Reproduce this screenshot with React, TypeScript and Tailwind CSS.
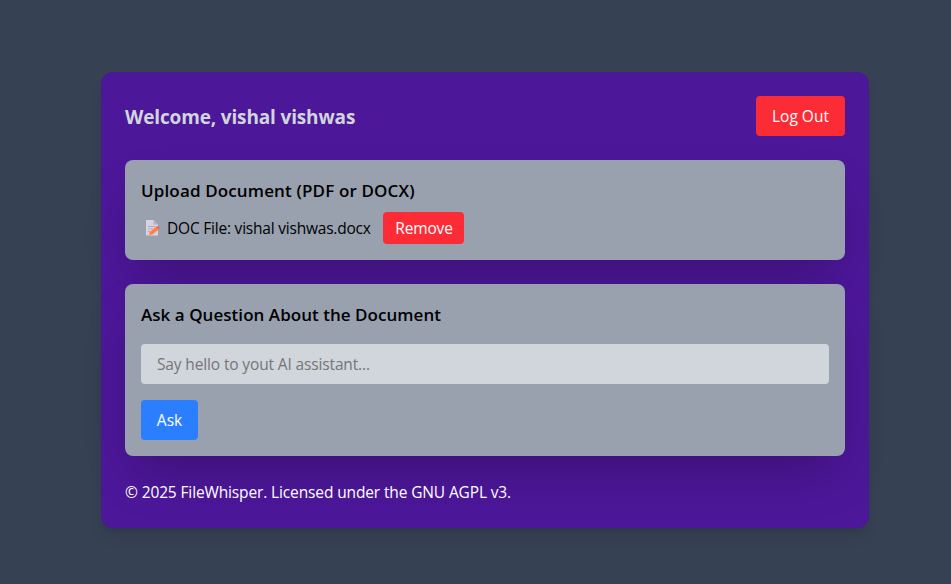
function MemoIcon() {
  return (
    <svg className="ml-1 mr-[7px] h-4 w-[15px] shrink-0" viewBox="0 0 15 16" aria-hidden="true">
      <path d="M1 0H8.5L13 4.5V15.5H1Z" fill="#d9d2e0" />
      <path d="M8.5 0V4.5H13Z" fill="#b9aec6" />
      <path d="M3 6.5H10M3 9H8M3 11.5H5" stroke="#b3a9bd" strokeWidth="1" />
      <path d="M4.7 12.2L11 6.8L14 9.3L7.4 14.6L3.6 15.4Z" fill="#ff8240" />
      <path d="M10.8 7L12 6Q13 5.7 14.2 7.2Q14.8 8.2 13.8 9.4Z" fill="#f06a5b" />
      <path d="M3.6 15.4L4.3 13.2L5.8 14.8Z" fill="#efb08d" />
    </svg>
  );
}

export default function App() {
  return (
    <div className="flex h-[584px] w-[951px] items-start overflow-hidden bg-gray-700 pt-[72px] pl-[101px] text-base text-black [font-family:'Open_Sans','Noto_Sans',sans-serif]">
      <main className="w-3xl shrink-0 rounded-xl bg-violet-900 p-6 shadow-lg">
        <header className="mb-6 flex items-center justify-between">
          <h1 className="pt-0.5 text-[19px] font-bold tracking-[-0.15px] whitespace-nowrap text-gray-300">Welcome, vishal vishwas</h1>
          <button className="h-10 w-[89px] rounded-sm bg-[#fb2c36] pt-0.5 text-[15.5px] whitespace-nowrap text-white">Log Out</button>
        </header>
        <section className="mb-6 rounded-lg bg-gray-400 p-4 shadow-2xl">
          <h2 className="mb-2 h-7 text-[17px] leading-[30px] font-semibold tracking-[0.14px] whitespace-nowrap">Upload Document (PDF or DOCX)</h2>
          <div className="flex h-8 items-center">
            <MemoIcon />
            <p className="w-[216px] pt-0.5 text-[15.5px] tracking-[-0.21px] whitespace-nowrap">DOC File: vishal vishwas.docx</p>
            <button className="h-8 w-[81px] rounded-sm bg-[#fb2c36] pt-0.5 pl-px text-[15.5px] tracking-[-0.15px] whitespace-nowrap text-white">Remove</button>
          </div>
        </section>
        <section className="mb-6 rounded-lg bg-gray-400 p-4 shadow-2xl">
          <h2 className="mb-4 h-7 text-[17px] leading-[30px] font-semibold tracking-[0.04px] whitespace-nowrap">Ask a Question About the Document</h2>
          <input className="mb-4 block h-10 w-full rounded-sm bg-gray-300 px-4 text-[15.5px] tracking-[-0.14px] placeholder:text-[#757575]" placeholder="Say hello to yout AI assistant..." />
          <button className="block h-10 w-[57px] rounded-sm bg-[#2b7fff] pt-0.5 text-[15.5px] text-white">Ask</button>
        </section>
        <footer className="text-[15.5px] leading-6 tracking-[-0.13px] whitespace-nowrap text-white">© 2025 FileWhisper. Licensed under the GNU AGPL v3.</footer>
      </main>
    </div>
  );
}
